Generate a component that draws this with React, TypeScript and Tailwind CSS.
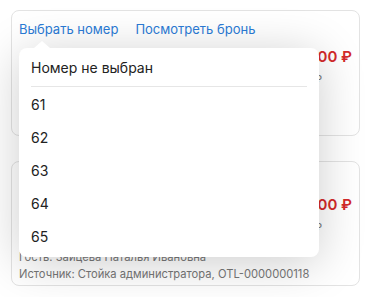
import React from "react";

const ROOMS = ["61", "62", "63", "64", "65"];

function Dropdown() {
  return (
    <div className="absolute left-[7px] top-[37px] z-10 w-[300px] rounded-[8px] bg-white pb-[5px] shadow-[0_6px_48px_rgba(0,0,0,0.2)]">
      {/* pointer */}
      <div className="absolute left-[15px] top-[-7px] h-0 w-0 border-x-[8px] border-b-[7px] border-x-transparent border-b-white" />
      <div className="flex h-[38px] items-center px-3 text-[14px] text-[#222]">Номер не выбран</div>
      <div className="mx-3 h-px bg-[#e6e6e6]" />
      {ROOMS.map((r) => (
        <div key={r} className="flex h-[33px] items-center px-3 pt-px text-[14px] text-[#222]">
          {r}
        </div>
      ))}
    </div>
  );
}

export default function App() {
  return (
    <div
      className="flex min-h-[297px] w-[371px] flex-col gap-[25px] bg-white px-[11px] pt-[10px]"
      style={{ fontFamily: "Inter, 'Noto Sans', sans-serif" }}
    >
      <div className="relative h-[126px] rounded-[8px] border border-[#e3e3e3] bg-white px-[7px] pt-[8px]">
        <div className="flex gap-[17px] text-[13px] leading-[20px] text-[#2b7bd6]">
          <span>Выбрать номер</span>
          <span>Посмотреть бронь</span>
        </div>
        <div className="mt-[8px] flex items-center justify-between leading-[20px]">
          <span className="text-[13px] text-[#222]">Стандартный двухместный</span>
          <span className="text-[15px] font-semibold text-[#d42a2a]">5 000 ₽</span>
        </div>
        <p className="mt-[5px] pr-[30px] text-right text-[11.2px] leading-[16px] text-[#777]">Оплачено: 0 ₽</p>
        <p className="mt-[11px] text-[11.2px] leading-[16px] text-[#777]">Гость: Петров Иван Сергеевич</p>
        <p className="mt-[1px] text-[11.2px] leading-[16px] text-[#777]">Источник: Стойка администратора, OTL-0000000117</p>
        <Dropdown />
      </div>

      <div className="h-[125px] rounded-[8px] border border-[#e3e3e3] bg-white px-[7px] pt-[8px]">
        <div className="flex gap-[17px] text-[13px] leading-[20px] text-[#2b7bd6]">
          <span>Выбрать номер</span>
          <span>Посмотреть бронь</span>
        </div>
        <div className="mt-[5px] flex items-center justify-between leading-[20px]">
          <span className="text-[13px] text-[#222]">Стандартный двухместный</span>
          <span className="text-[15px] font-semibold text-[#d42a2a]">5 000 ₽</span>
        </div>
        <p className="mt-[5px] pr-[30px] text-right text-[11.2px] leading-[16px] text-[#777]">Оплачено: 0 ₽</p>
        <p className="mt-[13px] text-[11.2px] leading-[16px] text-[#777]">Гость: Зайцева Наталья Ивановна</p>
        <p className="mt-[1px] text-[11.2px] leading-[16px] text-[#777]">Источник: Стойка администратора, OTL-0000000118</p>
      </div>
    </div>
  );
}
